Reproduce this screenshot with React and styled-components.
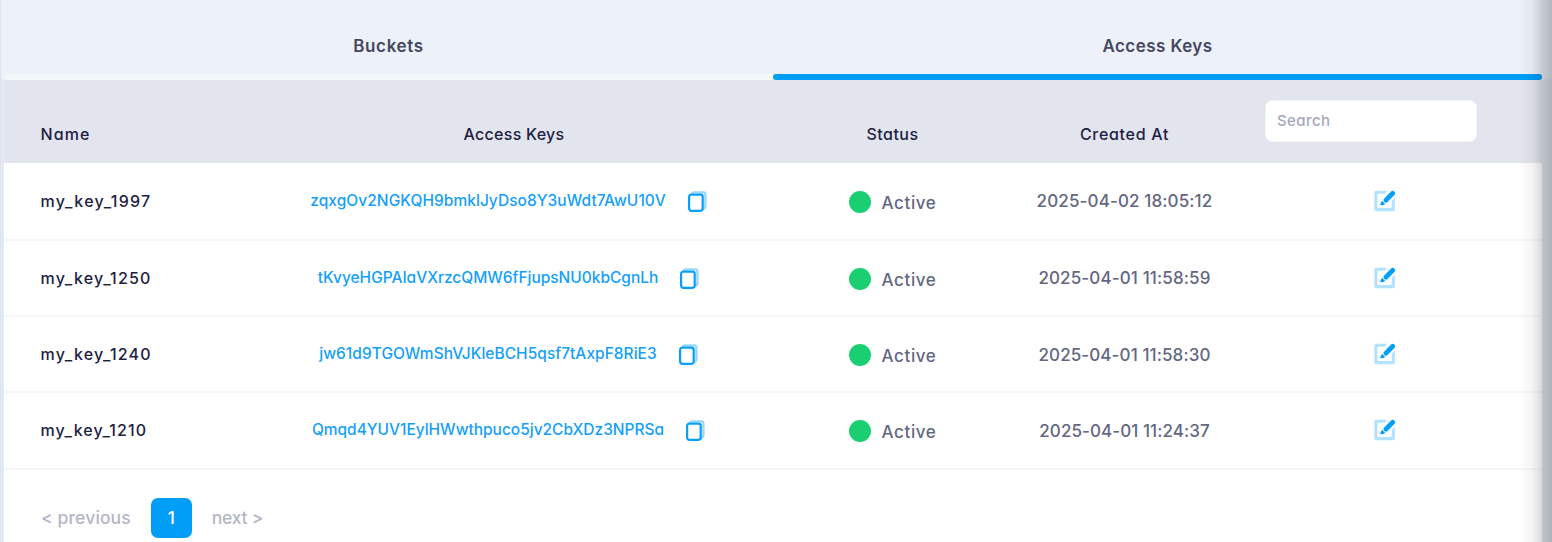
import React from "react";
import styled, { createGlobalStyle } from "styled-components";

const GlobalStyle = createGlobalStyle`
  * { box-sizing: border-box; }
  body {
    margin: 0;
    background: #e4e8f3;
    font-family: Inter, "Open Sans", sans-serif;
    font-feature-settings: "cv11" 1;
    font-weight: 500;
    color: #1d2142;
  }
`;

const Page = styled.div`
  position: relative;
  height: 542px;
  overflow: hidden;
  background: linear-gradient(#ecf1fa 0 79px, #e4e9f3 79px);
  border-left: 1px solid #dfe3ef;
  padding: 0 10px 0 3px;
`;

const EdgeShadow = styled.div`
  position: absolute;
  top: 0;
  right: 0;
  width: 32px;
  height: 100%;
  pointer-events: none;
  background: linear-gradient(
    to right,
    rgba(0, 0, 0, 0) 0,
    rgba(0, 0, 0, 0.02) 4px,
    rgba(0, 0, 0, 0.045) 12px,
    rgba(0, 0, 0, 0.09) 17px,
    rgba(0, 0, 0, 0.155) 22px,
    rgba(0, 0, 0, 0.2) 27px,
    rgba(0, 0, 0, 0.24) 32px
  );
`;

const Tabs = styled.nav`
  display: grid;
  grid-template-columns: 1fr 1fr;
  height: 80px;
`;

const Tab = styled.div`
  display: flex;
  flex-direction: column;
  align-items: center;
  justify-content: space-between;
  padding-top: 35px;
  font-size: 17px;
  line-height: 22px;
  font-weight: 600;
  color: #46485f;
  letter-spacing: ${(p) => p.$spacing}px;

  &::after {
    content: "";
    width: 100%;
    height: 6px;
    margin-bottom: 0.5px;
    border-radius: 3px;
    background: ${(p) => (p.$active ? "#009ef7" : "#f4f8fa")};
  }
`;

const Table = styled.section`
  background: #fff;
  height: 462px;
`;

const GridRow = styled.div`
  display: grid;
  grid-template-columns: 250px 520px 237px 227px 304px;
`;

const HeaderRow = styled(GridRow)`
  height: 83px;
  background: #e3e5ee;
  font-size: 16px;
  line-height: 22px;
`;

const HeaderCell = styled.div`
  padding-top: 43px;
  padding-left: ${(p) => p.$left || 0}px;
  text-align: ${(p) => p.$align || "center"};
  letter-spacing: ${(p) => p.$spacing}px;
`;

const SearchCell = styled.div`
  padding: 20px 0 0 27px;
`;

const SearchInput = styled.input`
  display: block;
  width: 212px;
  height: 42px;
  padding: 0 11px 2px;
  border: 1px solid #f1f3f8;
  border-radius: 7px;
  background: #fff;
  font: 500 15px Inter, sans-serif;
  font-feature-settings: inherit;
  letter-spacing: 0.4px;
  outline: none;

  &::placeholder {
    color: #a4a7bd;
    opacity: 1;
  }
`;

const BodyRow = styled(GridRow)`
  height: 76.2px;
  border-bottom: 2px solid #f6f7f9;
  align-items: center;

  &:nth-child(2) {
    height: 78px;
  }
`;

const NameCell = styled.div`
  padding-left: 36.5px;
  padding-bottom: 1px;
  font-size: 16px;
  letter-spacing: ${(p) => p.$spacing}px;
`;

const KeyCell = styled.div`
  display: flex;
  align-items: center;
  justify-content: center;
  gap: 22px;
  padding-right: 11px;
  color: #159ff7;
  font-size: 15.5px;
`;

const KeyText = styled.span`
  letter-spacing: ${(p) => p.$spacing}px;
  padding-bottom: 2px;
`;

const StatusCell = styled.div`
  display: flex;
  align-items: center;
  justify-content: center;
  gap: 11px;
  padding-top: 1px;
  color: #636782;
  font-size: 17px;
  letter-spacing: 0.6px;
`;

const StatusLabel = styled.span`
  padding-top: 3px;
`;

const StatusDot = styled.i`
  width: 22px;
  height: 22px;
  border-radius: 50%;
  background: #19cf72;
`;

const DateCell = styled.div`
  padding-top: 0.8px;
  text-align: center;
  color: #636782;
  font-size: 17px;
  letter-spacing: ${(p) => p.$spacing}px;
`;

const ActionCell = styled.div`
  display: flex;
  justify-content: center;
  padding-right: 11px;
`;

const Pagination = styled.footer`
  display: flex;
  align-items: center;
  gap: 20px;
  padding: 28px 0 0 37px;
  font-size: 17.5px;
  color: #b4b6c6;
`;

const PageStep = styled.span`
  letter-spacing: ${(p) => p.$spacing || 0}px;
`;

const PageNumber = styled.button`
  width: 41px;
  height: 40px;
  padding: 0;
  border: 0;
  border-radius: 7px;
  background: #009ef7;
  color: #fff;
  font: 500 17px Inter, sans-serif;
`;

const CopyIcon = () => (
  <svg width="19" height="21" viewBox="0 0 19 21" fill="none">
    <path d="M4 3.2Q4.3 1.4 6 1.4H15.2Q17.4 1.4 17.4 3.6V15Q17.4 17.4 15.3 17.6" stroke="#99d8fc" strokeWidth="2.4" />
    <rect x="1.1" y="3.7" width="13.6" height="16.1" rx="2.2" fill="#fff" stroke="#089ff7" strokeWidth="2.2" />
  </svg>
);

const EditIcon = () => (
  <svg width="22" height="22" viewBox="0 0 22 22" fill="none">
    <path d="M13.2 0.8 10.8 3.8H4.4Q3.4 3.8 3.4 4.8V17Q3.4 18 4.4 18H16.8Q17.8 18 17.8 17V10.8L20.9 7.8V19Q20.9 21.2 18.8 21.2H2.4Q0.3 21.2 0.3 19V3Q0.3 0.8 2.4 0.8Z" fill="#b2e2fd" />
    <path d="M12 10.2 18.6 3.3" stroke="#009ef7" strokeWidth="4.8" strokeLinecap="round" />
    <path d="M8 10.8 11.3 14 9.2 15.1 6.9 15.3Q6 15.2 6.4 14Z" fill="#009ef7" />
  </svg>
);

const keys = [
  { name: "my_key_1997", ns: 1.3, key: "zqxgOv2NGKQH9bmklJyDso8Y3uWdt7AwU10V", ks: 0.05, date: "2025-04-02 18:05:12", ds: 0.13 },
  { name: "my_key_1250", ns: 1.2, key: "tKvyeHGPAIaVXrzcQMW6fFjupsNU0kbCgnLh", ks: -0.02, date: "2025-04-01 11:58:59", ds: 0.13 },
  { name: "my_key_1240", ns: 1.18, key: "jw61d9TGOWmShVJKleBCH5qsf7tAxpF8RiE3", ks: 0.03, date: "2025-04-01 11:58:30", ds: 0.1 },
  { name: "my_key_1210", ns: 1.1, key: "Qmqd4YUV1EylHWwthpuco5jv2CbXDz3NPRSa", ks: -0.02, date: "2025-04-01 11:24:37", ds: 0.07 },
];

export default function App() {
  return (
    <>
      <GlobalStyle />
      <Page>
        <Tabs>
          <Tab $spacing={0.66}>Buckets</Tab>
          <Tab $active $spacing={0.44}>Access Keys</Tab>
        </Tabs>
        <Table>
          <HeaderRow>
            <HeaderCell $align="left" $left={36.5} $spacing={1.1}>Name</HeaderCell>
            <HeaderCell $spacing={0.27}>Access Keys</HeaderCell>
            <HeaderCell $spacing={0.45}>Status</HeaderCell>
            <HeaderCell $spacing={0.7}>Created At</HeaderCell>
            <SearchCell>
              <SearchInput placeholder="Search" />
            </SearchCell>
          </HeaderRow>
          {keys.map((k) => (
            <BodyRow key={k.name}>
              <NameCell $spacing={k.ns}>{k.name}</NameCell>
              <KeyCell>
                <KeyText $spacing={k.ks}>{k.key}</KeyText>
                <CopyIcon />
              </KeyCell>
              <StatusCell>
                <StatusDot />
                <StatusLabel>Active</StatusLabel>
              </StatusCell>
              <DateCell $spacing={k.ds}>{k.date}</DateCell>
              <ActionCell>
                <EditIcon />
              </ActionCell>
            </BodyRow>
          ))}
          <Pagination>
            <PageStep $spacing={0.13}>&lt; previous</PageStep>
            <PageNumber>1</PageNumber>
            <PageStep $spacing={-0.25}>next &gt;</PageStep>
          </Pagination>
        </Table>
        <EdgeShadow />
      </Page>
    </>
  );
}
